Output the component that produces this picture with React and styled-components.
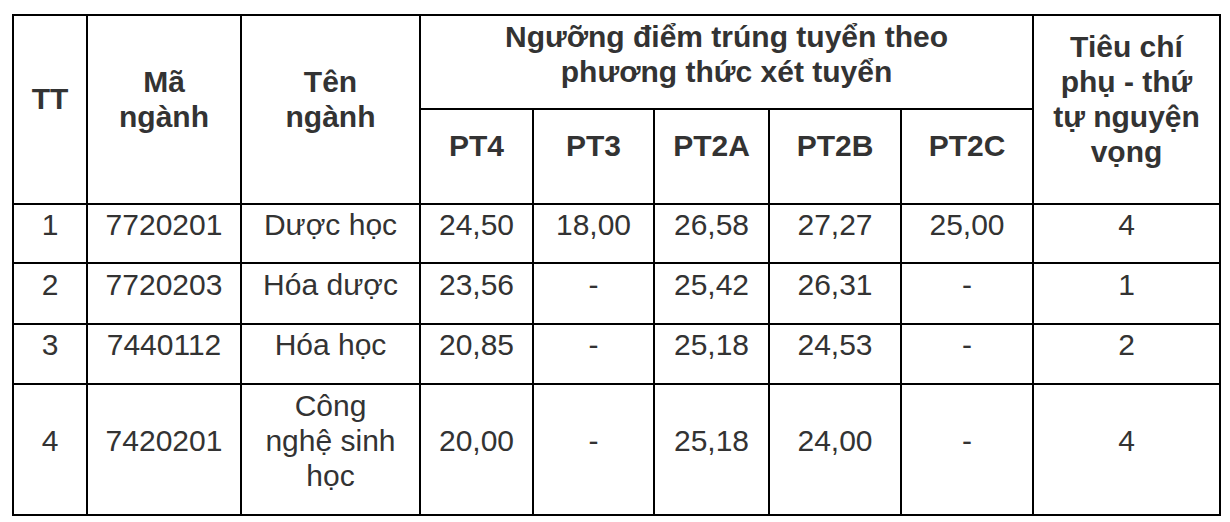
import React from "react";
import styled, { createGlobalStyle } from "styled-components";

const GlobalStyle = createGlobalStyle`
  body {
    margin: 0;
    background: #ffffff;
  }
`;

const rows = [
  { tt: "1", ma: "7720201", ten: ["Dược học"], pt4: "24,50", pt3: "18,00", pt2a: "26,58", pt2b: "27,27", pt2c: "25,00", nv: "4" },
  { tt: "2", ma: "7720203", ten: ["Hóa dược"], pt4: "23,56", pt3: "-", pt2a: "25,42", pt2b: "26,31", pt2c: "-", nv: "1" },
  { tt: "3", ma: "7440112", ten: ["Hóa học"], pt4: "20,85", pt3: "-", pt2a: "25,18", pt2b: "24,53", pt2c: "-", nv: "2" },
  { tt: "4", ma: "7420201", ten: ["Công", "nghệ sinh", "học"], pt4: "20,00", pt3: "-", pt2a: "25,18", pt2b: "24,00", pt2c: "-", nv: "4" },
];

const App = () => {
  return (
    <>
      <GlobalStyle />
      <Sheet>
        <HeadCell $rows={2}>TT</HeadCell>
        <HeadCell $rows={2}>
          Mã
          <br />
          ngành
        </HeadCell>
        <HeadCell $rows={2}>
          Tên
          <br />
          ngành
        </HeadCell>
        <HeadCell $cols={5} $pb={17}>
          Ngưỡng điểm trúng tuyển theo
          <br />
          phương thức xét tuyển
        </HeadCell>
        <HeadCell $rows={2}>
          Tiêu chí
          <br />
          phụ - thứ
          <br />
          tự nguyện
          <br />
          vọng
        </HeadCell>
        <HeadCell>PT4</HeadCell>
        <HeadCell>PT3</HeadCell>
        <HeadCell>PT2A</HeadCell>
        <HeadCell>PT2B</HeadCell>
        <HeadCell>PT2C</HeadCell>

        {rows.map((r) => (
          <React.Fragment key={r.tt}>
            <Cell>{r.tt}</Cell>
            <Cell>{r.ma}</Cell>
            <Cell>
              <Lines>
                {r.ten.map((line, i) => (
                  <React.Fragment key={i}>
                    {i > 0 && <br />}
                    {line}
                  </React.Fragment>
                ))}
              </Lines>
            </Cell>
            <Cell>{r.pt4}</Cell>
            <Cell>{r.pt3}</Cell>
            <Cell>{r.pt2a}</Cell>
            <Cell>{r.pt2b}</Cell>
            <Cell>{r.pt2c}</Cell>
            <Cell>{r.nv}</Cell>
          </React.Fragment>
        ))}
      </Sheet>
    </>
  );
};

const Sheet = styled.div`
  display: grid;
  grid-template-columns: 72px 152px 177px 111px 119px 113px 130px 130px 185px;
  grid-template-rows: 92px 93px 57px 59px 58px 129px;
  gap: 2px;
  padding: 2px;
  background: #000000;
  width: max-content;
  margin: 14px 0 0 12px;
`;

const Cell = styled.div`
  display: flex;
  align-items: center;
  justify-content: center;
  text-align: center;
  background: #ffffff;
  padding: 1px 16px 20px;
  font-family: "Liberation Sans", Arial, Helvetica, sans-serif;
  font-size: 30px;
  line-height: 35px;
  color: #333333;
`;

const Lines = styled.div`
  text-align: center;
`;

const HeadCell = styled(Cell)`
  font-weight: bold;
  padding: 0 16px ${(p) => p.$pb ?? 22}px;
  grid-row: ${(p) => (p.$rows ? `span ${p.$rows}` : "auto")};
  grid-column: ${(p) => (p.$cols ? `span ${p.$cols}` : "auto")};
`;

export default App;
